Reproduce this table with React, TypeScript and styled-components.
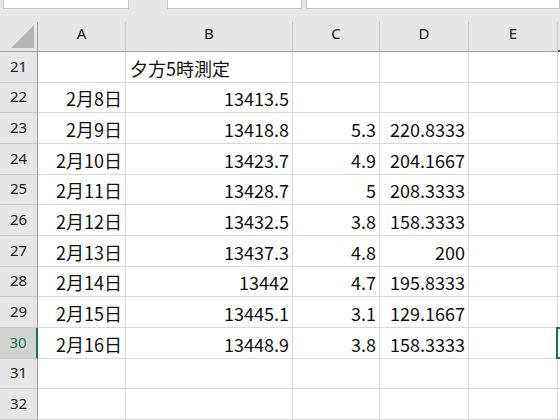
import React from "react";
import styled, { createGlobalStyle } from "styled-components";

const Global = createGlobalStyle`
  html, body { margin: 0; padding: 0; background: #e6e6e6; overflow: hidden; }
  body { width: 560px; height: 420px; }
`;

const COLS = "38px 88px 167px 87px 89px 89px 1fr";
const ROW_H = 30.667;

const Page = styled.div`
  width: 560px;
  height: 420px;
  overflow: hidden;
  background: #e6e6e6;
  font-family: "Noto Sans CJK JP", sans-serif;
`;

const FormulaBar = styled.div`
  height: 22px;
  display: flex;
  align-items: flex-start;
  overflow: hidden;
`;

const Field = styled.div<{ $w: string; $ml: number }>`
  box-sizing: border-box;
  margin-left: ${(p) => p.$ml}px;
  width: ${(p) => p.$w};
  height: 10px;
  margin-top: -1px;
  background: #fff;
  border: 1px solid #c6c6c6;
  border-top: none;
`;

const Sheet = styled.div`
  display: grid;
  grid-template-columns: ${COLS};
`;

const HeaderRow = styled.div`
  display: contents;
`;

const ColHead = styled.div<{ $sel?: boolean }>`
  box-sizing: border-box;
  height: 30px;
  border-right: 1px solid #cacaca;
  border-bottom: ${(p) => (p.$sel ? "2px solid #217346" : "1px solid #9e9e9e")};
  display: flex;
  align-items: center;
  justify-content: center;
  padding-bottom: 7px;
  font-family: "Noto Sans", sans-serif;
  font-size: 15px;
  color: #222;
  background: #e6e6e6;
`;

const Corner = styled.div`
  box-sizing: border-box;
  height: 30px;
  border-right: 1px solid #9e9e9e;
  border-bottom: 1px solid #9e9e9e;
  position: relative;
`;

const CornerTri = styled.svg`
  position: absolute;
  left: 11px;
  top: 3px;
`;

const RowHead = styled.div<{ $sel?: boolean }>`
  box-sizing: border-box;
  height: ${ROW_H}px;
  background: ${(p) => (p.$sel ? "#d2d2d2" : "#e6e6e6")};
  border-bottom: 1px solid #cacaca;
  border-right: ${(p) => (p.$sel ? "2px solid #217346" : "1px solid #9e9e9e")};
  display: flex;
  align-items: center;
  justify-content: center;
  padding-bottom: 2px;
  font-family: "Noto Sans", sans-serif;
  font-size: 15px;
  color: ${(p) => (p.$sel ? "#217346" : "#222")};
`;

const Cell = styled.div<{ $left?: boolean }>`
  box-sizing: border-box;
  height: ${ROW_H}px;
  background: #fff;
  border-right: 1px solid #d9d9d9;
  border-bottom: 1px solid #d9d9d9;
  display: flex;
  align-items: center;
  justify-content: ${(p) => (p.$left ? "flex-start" : "flex-end")};
  padding: 2px 3px 0 4px;
  font-size: 18px;
  color: #111;
  white-space: nowrap;
  position: relative;
`;

const SelBox = styled.div`
  position: absolute;
  left: -2px;
  top: -1px;
  right: -10px;
  bottom: -1px;
  border: 2px solid #217346;
  pointer-events: none;
`;

type Row = { n: number; a?: string; b?: string; c?: string; d?: string; bLeft?: boolean };

const rows: Row[] = [
  { n: 21, b: "夕方5時測定", bLeft: true },
  { n: 22, a: "2月8日", b: "13413.5" },
  { n: 23, a: "2月9日", b: "13418.8", c: "5.3", d: "220.8333" },
  { n: 24, a: "2月10日", b: "13423.7", c: "4.9", d: "204.1667" },
  { n: 25, a: "2月11日", b: "13428.7", c: "5", d: "208.3333" },
  { n: 26, a: "2月12日", b: "13432.5", c: "3.8", d: "158.3333" },
  { n: 27, a: "2月13日", b: "13437.3", c: "4.8", d: "200" },
  { n: 28, a: "2月14日", b: "13442", c: "4.7", d: "195.8333" },
  { n: 29, a: "2月15日", b: "13445.1", c: "3.1", d: "129.1667" },
  { n: 30, a: "2月16日", b: "13448.9", c: "3.8", d: "158.3333" },
  { n: 31 },
  { n: 32 },
];

export default function App() {
  return (
    <Page>
      <Global />
      <FormulaBar>
        <Field $w="129px" $ml={3} />
        <Field $w="139px" $ml={38} />
        <Field $w="260px" $ml={4} />
      </FormulaBar>
      <Sheet>
        <HeaderRow>
          <Corner>
            <CornerTri width="24" height="24" viewBox="0 0 24 24">
              <polygon points="23,0 23,23 0,23" fill="#b4b4b4" />
            </CornerTri>
          </Corner>
          <ColHead>A</ColHead>
          <ColHead>B</ColHead>
          <ColHead>C</ColHead>
          <ColHead>D</ColHead>
          <ColHead>E</ColHead>
          <ColHead $sel />
        </HeaderRow>
        {rows.map((r) => {
          const sel = r.n === 30;
          return (
            <React.Fragment key={r.n}>
              <RowHead $sel={sel}>{r.n}</RowHead>
              <Cell>{r.a}</Cell>
              <Cell $left={r.bLeft}>{r.b}</Cell>
              <Cell>{r.c}</Cell>
              <Cell>{r.d}</Cell>
              <Cell />
              <Cell>{sel && <SelBox />}</Cell>
            </React.Fragment>
          );
        })}
      </Sheet>
    </Page>
  );
}
